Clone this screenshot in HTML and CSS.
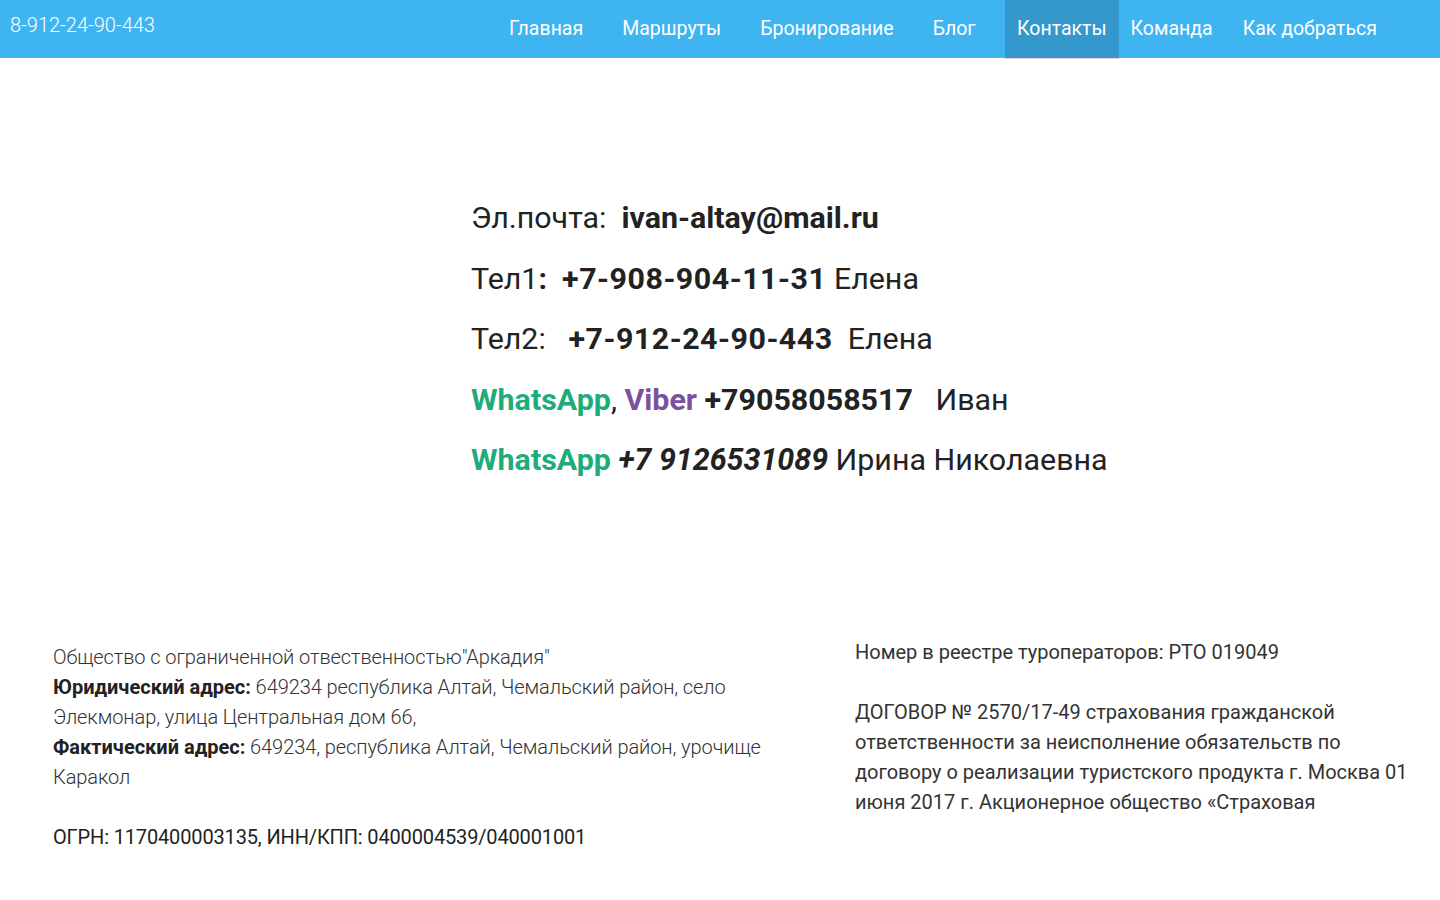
FILE: index.html
```html
<!DOCTYPE html>
<html lang="ru">
<head>
<meta charset="utf-8">
<title>Контакты</title>
<link rel="stylesheet" href="styles.css">
</head>
<body>
<header class="topbar">
  <div class="top-phone">8-912-24-90-443</div>
  <nav class="menu">
    <a class="menu-item wide" href="#">Главная</a>
    <a class="menu-item wide" href="#">Маршруты</a>
    <a class="menu-item wide" href="#">Бронирование</a>
    <a class="menu-item wide" href="#">Блог</a>
    <a class="menu-item active" href="#">Контакты</a>
    <a class="menu-item" href="#">Команда</a>
    <a class="menu-item last" href="#">Как добраться</a>
  </nav>
</header>

<main class="contacts">
  <div class="contact-list">
    <p class="line">Эл.почта:&nbsp; <b>ivan-altay@mail.ru</b></p>
    <p class="line">Тел1<b>:&nbsp; <span class="spaced">+7-908-904-11-31</span></b> Елена</p>
    <p class="line">Тел2:&nbsp;&nbsp; <b class="spaced">+7-912-24-90-443</b>&nbsp; Елена</p>
    <p class="line"><b class="wa">WhatsApp</b>, <b class="viber">Viber</b> <b>+79058058517</b>&nbsp;&nbsp; Иван</p>
    <p class="line"><b class="wa">WhatsApp</b> <b><i>+7 9126531089</i></b> Ирина Николаевна</p>
  </div>
</main>

<footer class="legal">
  <div class="legal-left">
    <p class="company">Общество с ограниченной отвественностью"Аркадия"<br>
    <strong>Юридический адрес:</strong> 649234 республика Алтай, Чемальский район, село Элекмонар, улица Центральная дом 66,<br>
    <strong>Фактический адрес:</strong> 649234, республика Алтай, Чемальский район, урочище Каракол</p>
    <p class="reg">ОГРН: 1170400003135, ИНН/КПП: 0400004539/040001001</p>
  </div>
  <div class="legal-right">
    <p>Номер в реестре туроператоров: РТО 019049</p>
    <p>ДОГОВОР № 2570/17-49 страхования гражданской ответственности за неисполнение обязательств по договору о реализации туристского продукта г. Москва 01 июня 2017 г. Акционерное общество «Страховая</p>
  </div>
</footer>
</body>
</html>
```

FILE: styles.css
```css
* { box-sizing: border-box; }

html, body {
  margin: 0;
  padding: 0;
  background: #ffffff;
}

body {
  font-family: Roboto, "Noto Sans", Arial, sans-serif;
  color: #222222;
}

.topbar {
  display: flex;
  align-items: flex-start;
  height: 58px;
  background: #3eb4f1;
  padding: 0 51px 0 10px;
}

.top-phone {
  color: #ffffff;
  font-size: 20px;
  font-weight: 300;
  line-height: 24px;
  padding-top: 13px;
}

.menu {
  display: flex;
  align-items: flex-start;
  margin-left: auto;
  height: 58px;
}

.menu-item {
  display: flex;
  align-items: center;
  height: 58px;
  padding: 0 12px 2px;
  color: #ffffff;
  font-size: 19.5px;
  font-weight: 400;
  text-decoration: none;
}

.menu-item.wide {
  padding: 0 19.5px 2px;
}

.menu-item.active {
  margin-left: 10px;
  height: 59px;
  padding-bottom: 2px;
  background: #3598cc;
  border-bottom: 1px solid #d9d6cf;
}

.menu-item.last {
  margin-left: 6px;
}

.contacts {
  display: flex;
  padding: 130px 0 0 471px;
}

.contact-list {
  font-size: 30.4px;
  line-height: 60.5px;
  color: #222222;
}

.line {
  margin: 0;
  white-space: nowrap;
}

.line b {
  font-weight: 700;
}

.line b .spaced,
.line b.spaced {
  letter-spacing: 0.5px;
}

.wa {
  color: #20ab7b;
}

.viber {
  color: #7b519e;
}

.legal {
  display: flex;
  padding: 151px 0 40px 53px;
  font-size: 20px;
  line-height: 30px;
}

.legal p {
  margin: 0;
}

.legal-left {
  width: 730px;
  font-weight: 300;
  color: #333333;
}

.legal-left .company {
  letter-spacing: -0.08px;
}

.legal-left strong {
  font-weight: 700;
  color: #222222;
  letter-spacing: 0;
}

.legal-left .reg {
  margin-top: 30px;
  font-weight: 400;
  color: #222222;
  letter-spacing: -0.15px;
}

.legal-right {
  width: 560px;
  margin-left: 72px;
  margin-top: -5px;
  font-weight: 400;
  color: #333333;
}

.legal-right p + p {
  margin-top: 30px;
}
```
